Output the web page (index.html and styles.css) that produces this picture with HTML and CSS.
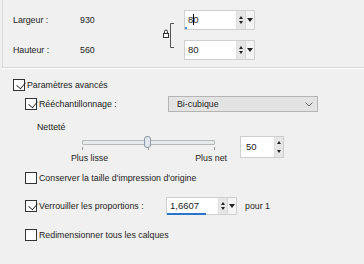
FILE: index.html
```html
<!DOCTYPE html>
<html>

<head>
    <title>Taille de l'image</title>
    <link rel="stylesheet" href="styles.css">
</head>

<body>
    <div class="dims">
        <div class="dim-labels">
            <span>Largeur :</span><span>930</span>
            <span>Hauteur :</span><span>560</span>
        </div>
        <svg class="link" width="26" height="30" viewBox="0 0 26 30">
            <path d="M6.5 13.5 V11.5 a1.5 1.5 0 0 1 3 0 V13.5" fill="none" stroke="#333" stroke-width="1"/>
            <rect x="5.5" y="13.5" width="5" height="4" fill="#fff" stroke="#333"/>
            <path d="M16 3.5 H12.5 V27.5 H16" fill="none" stroke="#555" stroke-width="1"/>
        </svg>
        <div class="dim-inputs">
            <div class="spin">
                <span class="field focus">8<span class="caret"></span>0</span>
                <span class="arrows"><i class="up"></i><i class="down"></i></span>
                <span class="drop"></span>
            </div>
            <div class="spin">
                <span class="field">80</span>
                <span class="arrows"><i class="up"></i><i class="down"></i></span>
                <span class="drop"></span>
            </div>
        </div>
    </div>

    <label class="row adv"><span class="box checked"></span>Paramètres avancés</label>

    <div class="row resample">
        <label class="check"><span class="box checked"></span>Rééchantillonnage :</label>
        <div class="select">Bi-cubique
            <svg width="8" height="5" viewBox="0 0 8 5"><path d="M0.5 0.5 L4 4 L7.5 0.5" fill="none" stroke="#666"/></svg>
        </div>
    </div>

    <div class="row sharp-label">Netteté</div>

    <div class="sharp">
        <div class="slider">
            <div class="track"><span class="thumb"></span></div>
            <div class="ticks"><i></i><i></i><i></i></div>
            <div class="ends"><span>Plus lisse</span><span>Plus net</span></div>
        </div>
        <div class="spin small">
            <span class="field">50</span>
            <span class="arrows"><i class="up"></i><i class="down"></i></span>
        </div>
    </div>

    <label class="row sub keep"><span class="box"></span>Conserver la taille d'impression d'origine</label>

    <div class="row sub ratio">
        <label class="check"><span class="box checked"></span>Verrouiller les proportions :</label>
        <div class="spin mid">
            <span class="field underline">1,6607</span>
            <span class="arrows"><i class="up"></i><i class="down"></i></span>
            <span class="drop"></span>
        </div>
        <span class="per">pour 1</span>
    </div>

    <label class="row sub last"><span class="box"></span>Redimensionner tous les calques</label>
</body>
</html>
```

FILE: styles.css
```css
body {
    margin: 0;
    background: #f0f0f0;
    font-family: "Liberation Sans", Arial, sans-serif;
    font-size: 8.8px;
    color: #222;
    width: 364px;
    height: 264px;
    overflow: hidden;
}

.dims {
    display: flex;
    height: 67px;
    margin-left: 2px;
    border-left: 1px solid #d9d9d9;
    border-bottom: 1px solid #d9d9d9;
    box-shadow: 0 1px 0 #fff;
}

.dim-labels {
    display: grid;
    grid-template-columns: 67px 78px;
    grid-template-rows: 20px 20px;
    row-gap: 10px;
    width: 155px;
    padding: 10px 0 0 10px;
    box-sizing: border-box;
    line-height: 20px;
}

.link {
    margin-top: 20px;
}

.dim-inputs {
    display: flex;
    flex-direction: column;
    gap: 10px;
    padding-top: 10px;
}

.spin {
    display: flex;
    width: 71px;
    height: 20px;
    background: #fff;
    border: 1px solid #cfcfcf;
    box-sizing: border-box;
}

.spin.mid { height: 18px; }
.spin.small { width: 44px; height: 22px; }

.field {
    flex: 1;
    position: relative;
    padding-left: 3px;
    line-height: 18px;
    font-size: 9.5px;
}

.spin.mid .field { line-height: 16px; }
.spin.small .field { line-height: 20px; padding-left: 5px; }

.field.focus::after {
    content: "";
    position: absolute;
    left: 0;
    bottom: 0;
    width: 2px;
    height: 2px;
    background: #4a8ad0;
}

.field.underline::after {
    content: "";
    position: absolute;
    left: 0;
    right: 12px;
    bottom: -1px;
    height: 2px;
    background: #2a77c9;
}

.caret {
    display: inline-block;
    width: 1px;
    height: 11px;
    background: #000;
    vertical-align: -2px;
    margin-right: -1px;
}

.arrows {
    display: flex;
    flex-direction: column;
    justify-content: center;
    align-items: center;
    gap: 2px;
    width: 8px;
    background: #e6e6e6;
    border-left: 1px solid #e0e0e0;
}

.spin.small .arrows {
    gap: 6px;
}

.arrows i {
    display: block;
    width: 0;
    height: 0;
    border-left: 2.5px solid transparent;
    border-right: 2.5px solid transparent;
}

.arrows .up { border-bottom: 3px solid #222; }
.arrows .down { border-top: 3px solid #222; }

.drop {
    width: 8px;
    display: flex;
    align-items: center;
    justify-content: center;
    border-left: 1px solid #d8d8d8;
    background: #f4f4f4;
}

.drop::before {
    content: "";
    border-left: 3px solid transparent;
    border-right: 3px solid transparent;
    border-top: 4px solid #222;
}

.row {
    display: flex;
    align-items: center;
    height: 18px;
}

.box {
    width: 10px;
    height: 10px;
    border: 1px solid #333;
    background: #fff;
    margin-right: 2px;
    flex: none;
    position: relative;
}

.box.checked::after {
    content: "";
    position: absolute;
    left: 3px;
    top: 0;
    width: 6px;
    height: 9px;
    border-right: 1px solid #222;
    border-bottom: 1px solid #222;
    transform: rotate(40deg) scale(0.8) translate(0, -1px);
}

.check {
    display: flex;
    align-items: center;
}

.adv {
    margin-top: 8px;
    padding-left: 13px;
}

.resample {
    margin-top: 1px;
    padding-left: 25px;
}

.resample .check {
    width: 143px;
}

.select {
    width: 150px;
    height: 16px;
    box-sizing: border-box;
    border: 1px solid #b4b4b4;
    background: #e3e3e3;
    display: flex;
    align-items: center;
    justify-content: space-between;
    padding: 0 4px 0 8px;
}

.sharp-label {
    margin-top: 6px;
    padding-left: 37px;
    height: 16px;
}

.sharp {
    display: flex;
    height: 32px;
}

.slider {
    width: 145px;
    margin-left: 76px;
    padding-top: 5px;
}

.track {
    position: relative;
    height: 3px;
    margin: 0 6px;
    background: #e7eaea;
    border: 1px solid #b8b8b8;
    border-radius: 1px;
}

.thumb {
    position: absolute;
    left: 61px;
    top: -5px;
    width: 5px;
    height: 10px;
    border: 1px solid #8c99a8;
    border-radius: 3px;
    background: #dfe6ee;
}

.ticks {
    display: flex;
    justify-content: space-between;
    margin: 2px 6px 0;
    height: 3px;
}

.ticks i {
    width: 1px;
    background: #999;
}

.ends {
    display: flex;
    justify-content: space-between;
    margin-top: 2px;
    line-height: 12px;
}

.ends span:first-child { margin-left: -5px; }
.ends span:last-child { margin-right: -6px; }

.spin.small {
    margin: 1px 0 0 19px;
}

.sub {
    padding-left: 25px;
}

.keep {
    margin-top: 2px;
}

.ratio {
    margin-top: 9px;
    height: 20px;
}

.ratio .check {
    width: 141px;
}

.per {
    margin-left: 8px;
}

.last {
    margin-top: 10px;
}
```
